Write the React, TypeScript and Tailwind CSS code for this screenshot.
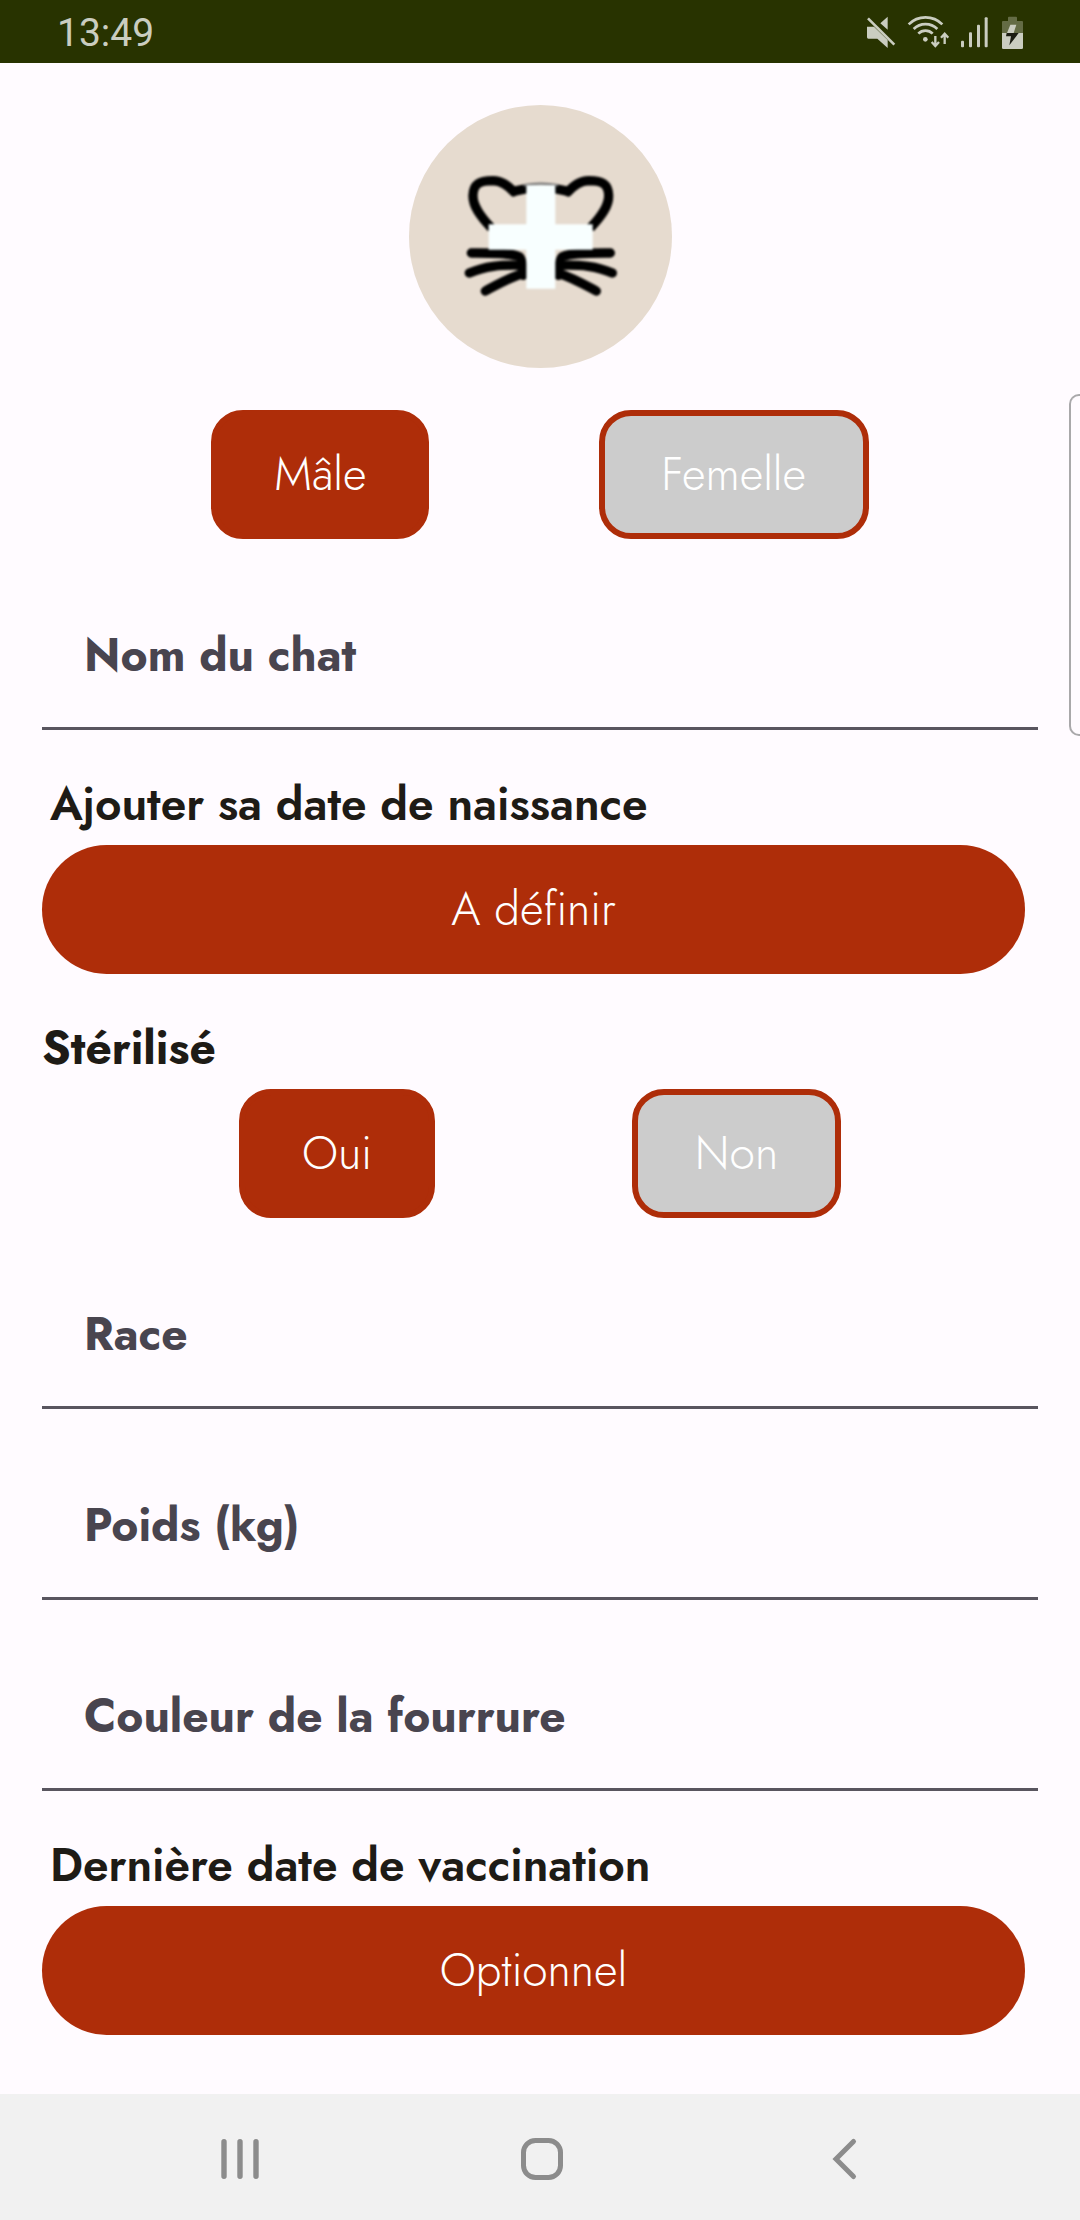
import React, { useState } from "react";

function StatusIcons() {
  return (
    <div className="flex items-center gap-[11px] text-[#cacdc0]" aria-hidden="true">
      <svg className="h-9 w-[30px]" viewBox="78 42 90 108" fill="currentColor">
        <path d="M81 80h21l41 40v24l-31-28H85q-4 0-4-4zM121 70l22-20v39z" />
        <path d="M84 55l79 79" stroke="currentColor" strokeWidth="8" />
      </svg>
      <svg className="h-9 w-[42px]" viewBox="201 42 126 108" fill="none" stroke="currentColor">
        <path d="M206 73a71 71 0 0 1 101 0M221 87a50 50 0 0 1 71 0M235 101a30 30 0 0 1 43 0" strokeWidth="8" />
        <circle cx="256" cy="118" r="7" fill="currentColor" stroke="none" />
        <path d="M286 108v28M275 126l11 12l11-12M314 132v-30M303 113l11-12l11 12" strokeWidth="7" />
      </svg>
      <svg className="h-9 w-[30px]" viewBox="360 42 90 108" fill="currentColor">
        <rect x="363" y="122" width="9" height="20" rx="3" />
        <rect x="387" y="97" width="9" height="45" rx="3" />
        <rect x="411" y="74" width="9" height="68" rx="3" />
        <rect x="434" y="52" width="9" height="90" rx="3" />
      </svg>
      <svg className="h-9 w-[23px]" viewBox="483 42 69 108">
        <path d="M504 63V53q0-3 3-3h21q3 0 3 3v10h15q3 0 3 3v34h-63V66q0-3 3-3z" fill="#646c45" />
        <path d="M486 99h63v44q0 4-4 4h-55q-4 0-4-4z" fill="currentColor" />
        <path d="M511 74h18l-8 25h-20z" fill="currentColor" />
        <path d="M500 99h36l-28 37l5-27h-15z" fill="#1b1d12" />
      </svg>
    </div>
  );
}

function CatHalf() {
  return (
    <g fill="none" stroke="#000" strokeWidth="28" strokeLinecap="round">
      <path
        d="M274 398C240 362 218 332 219 300C220 266 238 256 278 256C306 257 322 270 340 288L384 279"
        strokeLinecap="butt"
      />
      <path d="M330 286L340 305L362 294z" fill="#000" stroke="none" />
      <path d="M214 473C270 473 330 472 358 484Q368 489 370 540" />
      <path d="M208 533C255 512 300 508 368 510" />
      <path d="M256 587C295 566 330 546 372 533" />
    </g>
  );
}

function CatLogo() {
  return (
    <svg
      className="size-[263px] rounded-full bg-[#e6dbcf]"
      viewBox="27 29 789 789"
      role="img"
      aria-label="Photo du chat"
    >
      <g className="blur-[3px]">
        <CatHalf />
        <g transform="translate(845 0) scale(-1 1)">
          <CatHalf />
        </g>
        <path d="M370 270Q422 260 475 270" fill="none" stroke="#777" strokeWidth="7" />
        <path d="M379 270h87v117h112v76H466v117h-87V463H266v-76h113z" fill="#f8ffff" />
      </g>
    </svg>
  );
}

function Choice({ options }: { options: { label: string; width: string }[] }) {
  const [active, setActive] = useState(0);
  return (
    <div className="flex justify-evenly">
      {options.map((o, i) => (
        <button
          key={o.label}
          type="button"
          aria-pressed={i === active}
          onClick={() => setActive(i)}
          className={`h-[129px] rounded-[32px] border-6 border-[#ae2d09] text-center text-[46px] font-light text-white ${o.width} ${
            i === active ? "bg-[#ae2d09]" : "bg-[#cccccc]"
          }`}
        >
          {o.label}
        </button>
      ))}
    </div>
  );
}

function Field({ label }: { label: string }) {
  return (
    <input
      type="text"
      aria-label={label}
      placeholder={label}
      className="block h-[149px] w-full border-b-3 border-[#59555f] bg-transparent px-[42px] pt-0.5 text-[46px] font-bold text-[#49454f] outline-none placeholder:text-[#49454f] placeholder:opacity-100"
    />
  );
}

function DateField({ id, label, value }: { id: string; label: string; value: string }) {
  return (
    <div>
      <label htmlFor={id} className="block px-2 pb-2 text-[46px] leading-[65px] font-semibold">
        {label}
      </label>
      <div className="pr-[13px]">
        <button
          id={id}
          type="button"
          className="block h-[129px] w-full rounded-full bg-[#ae2d09] text-[46px] font-light text-white"
        >
          {value}
        </button>
      </div>
    </div>
  );
}

export default function App() {
  return (
    <div className="relative flex min-h-screen flex-col bg-[#fffbff] font-['Jost','Lato',sans-serif] text-[#1e1b16]">
      <header className="flex h-[63px] items-center justify-between bg-[#283300] pr-14 pl-[57px]">
        <time className="pt-1 font-['Roboto',sans-serif] text-[39px] leading-none text-[#cacdc0]">13:49</time>
        <StatusIcons />
      </header>

      <main className="flex flex-1 flex-col gap-[42px] px-[42px] pt-[42px] pb-[59px]">
        <div className="flex justify-center">
          <CatLogo />
        </div>
        <Choice
          options={[
            { label: "Mâle", width: "w-[218px]" },
            { label: "Femelle", width: "w-[270px]" },
          ]}
        />
        <Field label="Nom du chat" />
        <DateField id="naissance" label="Ajouter sa date de naissance" value="A définir" />
        <section>
          <h2 className="pb-2 text-[46px] leading-[65px] font-bold">Stérilisé</h2>
          <Choice
            options={[
              { label: "Oui", width: "w-[196px]" },
              { label: "Non", width: "w-[209px]" },
            ]}
          />
        </section>
        <Field label="Race" />
        <Field label="Poids (kg)" />
        <Field label="Couleur de la fourrure" />
        <DateField id="vaccination" label="Dernière date de vaccination" value="Optionnel" />
      </main>

      <div className="absolute top-[394px] right-0 h-[342px] w-[11px] rounded-l-[10px] border-2 border-r-0 border-[#a9a8aa] bg-[#fffbff]" />

      <nav className="flex h-[126px] items-center justify-between bg-[#f1f1f1] pt-1 pr-[212px] pl-[216px] text-[#8c8c8c]">
        <button type="button" aria-label="Applications récentes">
          <svg className="size-12" viewBox="0 0 48 48" stroke="currentColor" strokeWidth="5.4" strokeLinecap="round">
            <path d="M8 6.7v34.6M24 6.7v34.6M40 6.7v34.6" />
          </svg>
        </button>
        <button type="button" aria-label="Accueil">
          <svg className="size-12" viewBox="0 0 48 48" fill="none" stroke="currentColor" strokeWidth="5">
            <rect x="5.5" y="5.5" width="37" height="37" rx="12" />
          </svg>
        </button>
        <button type="button" aria-label="Retour">
          <svg className="size-12" viewBox="0 0 48 48" fill="none" stroke="currentColor" strokeWidth="5" strokeLinecap="round">
            <path d="M33.500 6.500L16 24L33.500 41.500" />
          </svg>
        </button>
      </nav>
    </div>
  );
}
